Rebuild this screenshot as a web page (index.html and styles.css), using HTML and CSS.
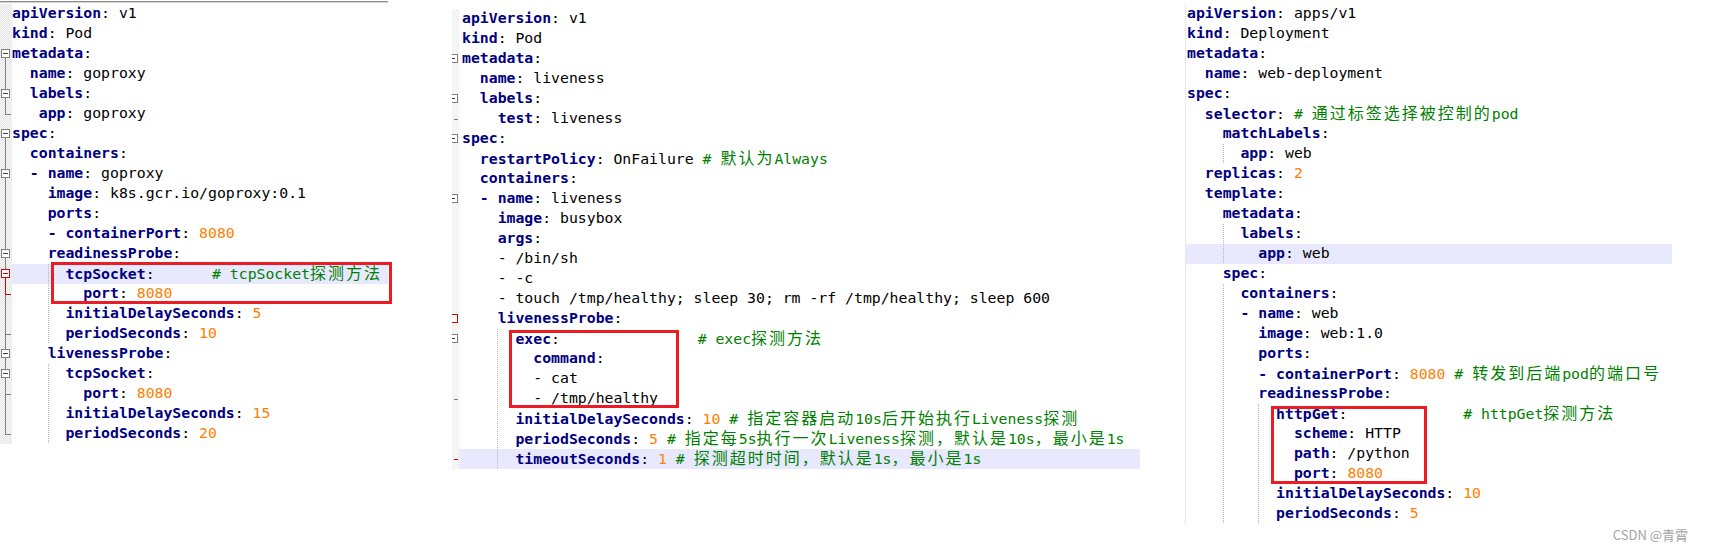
FILE: index.html
```html
<!DOCTYPE html>
<html lang="zh">
<head>
    <meta charset="UTF-8">
    <meta name="viewport" content="width=device-width, initial-scale=1.0">
    <title>Probe YAML</title>
    <link rel="stylesheet" href="styles.css">
</head>
<body>
    <div class="shot">
        <!-- tcpSocket -->
        <section class="pane pane-a">
            <div class="rule"></div>
            <div class="row"><i class="gut"></i><code class="src"><span class="k">apiVersion</span>: v1</code></div>
            <div class="row"><i class="gut"></i><code class="src"><span class="k">kind</span>: Pod</code></div>
            <div class="row"><i class="gut top"></i><code class="src"><span class="k">metadata</span>:</code></div>
            <div class="row"><i class="gut ln"></i><code class="src">  <span class="k">name</span>: goproxy</code></div>
            <div class="row"><i class="gut mid"></i><code class="src">  <span class="k">labels</span>:</code></div>
            <div class="row"><i class="gut end"></i><code class="src">   <span class="k">app</span>: goproxy</code></div>
            <div class="row"><i class="gut top"></i><code class="src"><span class="k">spec</span>:</code></div>
            <div class="row"><i class="gut ln"></i><code class="src">  <span class="k">containers</span>:</code></div>
            <div class="row"><i class="gut mid"></i><code class="src">  <span class="k">- name</span>: goproxy</code></div>
            <div class="row"><i class="gut ln"></i><code class="src">    <span class="k">image</span>: k8s.gcr.io/goproxy:0.1</code></div>
            <div class="row"><i class="gut ln"></i><code class="src">    <span class="k">ports</span>:</code></div>
            <div class="row"><i class="gut ln"></i><code class="src">    <span class="k">- containerPort</span>: <span class="n">8080</span></code></div>
            <div class="row"><i class="gut mid"></i><code class="src">    <span class="k">readinessProbe</span>:</code></div>
            <div class="row"><i class="gut mid red"></i><code class="src hl g4">      <span class="k">tcpSocket</span>:      <span class="c sp"># tcpSocket<span class="z">探测方法</span></span></code></div>
            <div class="row"><i class="gut endr"></i><code class="src g4">        <span class="k">port</span>: <span class="n">8080</span></code></div>
            <div class="row"><i class="gut ln"></i><code class="src g4">      <span class="k">initialDelaySeconds</span>: <span class="n">5</span></code></div>
            <div class="row"><i class="gut endc"></i><code class="src g4">      <span class="k">periodSeconds</span>: <span class="n">10</span></code></div>
            <div class="row"><i class="gut mid"></i><code class="src">    <span class="k">livenessProbe</span>:</code></div>
            <div class="row"><i class="gut mid"></i><code class="src g4">      <span class="k">tcpSocket</span>:</code></div>
            <div class="row"><i class="gut endc"></i><code class="src g4">        <span class="k">port</span>: <span class="n">8080</span></code></div>
            <div class="row"><i class="gut ln"></i><code class="src g4">      <span class="k">initialDelaySeconds</span>: <span class="n">15</span></code></div>
            <div class="row"><i class="gut end"></i><code class="src g4">      <span class="k">periodSeconds</span>: <span class="n">20</span></code></div>
            <div class="mark mark-a"></div>
        </section>

        <!-- exec -->
        <section class="pane pane-b">
            <div class="row"><i class="gut"></i><code class="src"><span class="k">apiVersion</span>: v1</code></div>
            <div class="row"><i class="gut"></i><code class="src"><span class="k">kind</span>: Pod</code></div>
            <div class="row"><i class="gut cut"></i><code class="src"><span class="k">metadata</span>:</code></div>
            <div class="row"><i class="gut"></i><code class="src">  <span class="k">name</span>: liveness</code></div>
            <div class="row"><i class="gut cut"></i><code class="src">  <span class="k">labels</span>:</code></div>
            <div class="row"><i class="gut tick"></i><code class="src">    <span class="k">test</span>: liveness</code></div>
            <div class="row"><i class="gut cut"></i><code class="src"><span class="k">spec</span>:</code></div>
            <div class="row"><i class="gut"></i><code class="src">  <span class="k">restartPolicy</span>: OnFailure <span class="c"># <span class="z">默认为</span>Always</span></code></div>
            <div class="row"><i class="gut"></i><code class="src">  <span class="k">containers</span>:</code></div>
            <div class="row"><i class="gut cut"></i><code class="src">  <span class="k">- name</span>: liveness</code></div>
            <div class="row"><i class="gut"></i><code class="src">    <span class="k">image</span>: busybox</code></div>
            <div class="row"><i class="gut"></i><code class="src">    <span class="k">args</span>:</code></div>
            <div class="row"><i class="gut"></i><code class="src">    - /bin/sh</code></div>
            <div class="row"><i class="gut"></i><code class="src">    - -c</code></div>
            <div class="row"><i class="gut"></i><code class="src">    - touch /tmp/healthy; sleep 30; rm -rf /tmp/healthy; sleep 600</code></div>
            <div class="row"><i class="gut cut red"></i><code class="src">    <span class="k">livenessProbe</span>:</code></div>
            <div class="row"><i class="gut cut"></i><code class="src g4">      <span class="k">exec</span>:               <span class="c sp"># exec<span class="z">探测方法</span></span></code></div>
            <div class="row"><i class="gut"></i><code class="src g4">        <span class="k">command</span>:</code></div>
            <div class="row"><i class="gut"></i><code class="src g4">        - cat</code></div>
            <div class="row"><i class="gut tick"></i><code class="src g4">        - /tmp/healthy</code></div>
            <div class="row"><i class="gut"></i><code class="src g4">      <span class="k">initialDelaySeconds</span>: <span class="n">10</span> <span class="c"># <span class="z">指定容器启动</span>10s<span class="z">后开始执行</span>Liveness<span class="z">探测</span></span></code></div>
            <div class="row"><i class="gut"></i><code class="src g4">      <span class="k">periodSeconds</span>: <span class="n">5</span> <span class="c"># <span class="z">指定每</span>5s<span class="z">执行一次</span>Liveness<span class="z">探测，默认是</span>10s<span class="z">，最小是</span>1s</span></code></div>
            <div class="row"><i class="gut tick red"></i><code class="src hl g4">      <span class="k">timeoutSeconds</span>: <span class="n">1</span> <span class="c"># <span class="z">探测超时时间，默认是</span>1s<span class="z">，最小是</span>1s</span></code></div>
            <div class="mark mark-b"></div>
        </section>

        <!-- httpGet -->
        <section class="pane pane-c">
            <div class="row"><i class="gut"></i><code class="src"><span class="k">apiVersion</span>: apps/v1</code></div>
            <div class="row"><i class="gut"></i><code class="src"><span class="k">kind</span>: Deployment</code></div>
            <div class="row"><i class="gut"></i><code class="src"><span class="k">metadata</span>:</code></div>
            <div class="row"><i class="gut"></i><code class="src">  <span class="k">name</span>: web-deployment</code></div>
            <div class="row"><i class="gut"></i><code class="src"><span class="k">spec</span>:</code></div>
            <div class="row"><i class="gut"></i><code class="src">  <span class="k">selector</span>: <span class="c"># <span class="z">通过标签选择被控制的</span>pod</span></code></div>
            <div class="row"><i class="gut"></i><code class="src">    <span class="k">matchLabels</span>:</code></div>
            <div class="row"><i class="gut"></i><code class="src g4">      <span class="k">app</span>: web</code></div>
            <div class="row"><i class="gut"></i><code class="src">  <span class="k">replicas</span>: <span class="n">2</span></code></div>
            <div class="row"><i class="gut"></i><code class="src">  <span class="k">template</span>:</code></div>
            <div class="row"><i class="gut"></i><code class="src">    <span class="k">metadata</span>:</code></div>
            <div class="row"><i class="gut"></i><code class="src g4">      <span class="k">labels</span>:</code></div>
            <div class="row"><i class="gut"></i><code class="src hl g4">        <span class="k">app</span>: web</code></div>
            <div class="row"><i class="gut"></i><code class="src">    <span class="k">spec</span>:</code></div>
            <div class="row"><i class="gut"></i><code class="src g4">      <span class="k">containers</span>:</code></div>
            <div class="row"><i class="gut"></i><code class="src g4">      <span class="k">- name</span>: web</code></div>
            <div class="row"><i class="gut"></i><code class="src g4">        <span class="k">image</span>: web:1.0</code></div>
            <div class="row"><i class="gut"></i><code class="src g4">        <span class="k">ports</span>:</code></div>
            <div class="row"><i class="gut"></i><code class="src g4">        <span class="k">- containerPort</span>: <span class="n">8080</span> <span class="c"># <span class="z">转发到后端</span>pod<span class="z">的端口号</span></span></code></div>
            <div class="row"><i class="gut"></i><code class="src g4">        <span class="k">readinessProbe</span>:</code></div>
            <div class="row"><i class="gut"></i><code class="src g48">          <span class="k">httpGet</span>:             <span class="c"># httpGet<span class="z">探测方法</span></span></code></div>
            <div class="row"><i class="gut"></i><code class="src g48">            <span class="k">scheme</span>: HTTP</code></div>
            <div class="row"><i class="gut"></i><code class="src g48">            <span class="k">path</span>: /python</code></div>
            <div class="row"><i class="gut"></i><code class="src g48">            <span class="k">port</span>: <span class="n">8080</span></code></div>
            <div class="row"><i class="gut"></i><code class="src g48">          <span class="k">initialDelaySeconds</span>: <span class="n">10</span></code></div>
            <div class="row"><i class="gut"></i><code class="src g48">          <span class="k">periodSeconds</span>: <span class="n">5</span></code></div>
            <div class="mark mark-c"></div>
        </section>
    </div>

    <div class="watermark">CSDN @青霄</div>
</body>
</html>
```

FILE: styles.css
```css
body {
    margin: 0;
    width: 1710px;
    height: 550px;
    overflow: hidden;
    position: relative;
    background: #fff;
    font-family: "DejaVu Sans Mono", "Liberation Mono", monospace;
}
.shot {
    display: flex;
    align-items: flex-start;
}
.pane {
    position: relative;
    flex: none;
    --g4: 36px;
    --g8: 71px;
}
.pane-a {
    width: 388px;
    padding-top: 1px;
}
.pane-b {
    width: 688px;
    margin-left: 64px;
    padding-top: 9px;
    --g4: 38px;
}
.pane-c {
    width: 492px;
    margin-left: 40px;
    padding-top: 4px;
    --g4: 37px;
    --g8: 72px;
}
.rule {
    height: 1px;
    border-top: 1px solid #8c8c8c;
    background: #d4d4d4;
    margin-bottom: 1px;
}

/* one line of code */
.row {
    display: flex;
    height: 20px;
}
.src {
    flex: 1;
    display: block;
    white-space: pre;
    font-family: inherit;
    font-size: 14.8px;
    line-height: 18px;
    color: #000;
    background-repeat: no-repeat;
}
.pane-b .src { padding-left: 3px; }
.pane-c .src { padding-left: 1px; }
.hl { background-color: #e8e8ff; }
.g4 {
    background-image: repeating-linear-gradient(to bottom, #b4b4b4 0 1px, transparent 1px 2px);
    background-size: 1px 100%;
    background-position: var(--g4) 0;
}
.g48 {
    background-image:
        repeating-linear-gradient(to bottom, #b4b4b4 0 1px, transparent 1px 2px),
        repeating-linear-gradient(to bottom, #b4b4b4 0 1px, transparent 1px 2px);
    background-size: 1px 100%, 1px 100%;
    background-position: var(--g4) 0, var(--g8) 0;
}

.k { color: #000080; font-weight: bold; }
.n { color: #ff8000; }
.c { color: #008000; }
.sp { margin-left: 4px; }
.z {
    font-family: "Noto Sans CJK SC", sans-serif;
    font-size: 16px;
    line-height: 16px;
    letter-spacing: 2px;
}

/* fold margin */
.gut {
    flex: none;
    position: relative;
    width: 12px;
    height: 20px;
    background: repeating-conic-gradient(#e2e2e2 0 25%, #fbfbfb 0 50%) 0 0 / 2px 2px;
}
.pane-b .gut {
    width: 7px;
    overflow: hidden;
    background: repeating-conic-gradient(#ececec 0 25%, #fff 0 50%) 4px 0 / 2px 2px;
}
.pane-c .gut {
    width: 6px;
    background: repeating-linear-gradient(to bottom, #d6d6d6 0 1px, transparent 1px 2px) 5px 0 / 1px 100% no-repeat;
}
.gut::before,
.gut::after {
    content: "";
    position: absolute;
}
.ln::before,
.mid::before,
.endc::before {
    left: 5px;
    top: 0;
    bottom: 0;
    width: 1px;
    background: #808080;
}
.top::before {
    left: 5px;
    top: 10px;
    bottom: 0;
    width: 1px;
    background: #808080;
}
.end::before {
    left: 5px;
    top: 0;
    height: 11px;
    width: 1px;
    background: #808080;
}
.endr::before {
    left: 5px;
    top: 0;
    bottom: 0;
    width: 1px;
    background: linear-gradient(#e00000 0 11px, #808080 11px);
}
.top::after,
.mid::after {
    left: 1px;
    top: 5px;
    width: 9px;
    height: 9px;
    box-sizing: border-box;
    border: 1px solid #808080;
    background: linear-gradient(#404040, #404040) center / 5px 1px no-repeat, #fff;
}
.mid.red::before { background: linear-gradient(#808080 0 6px, #e00000 6px); }
.mid.red::after {
    border-color: #e00000;
    background: linear-gradient(#e00000, #e00000) center / 5px 1px no-repeat, #fff;
}
.end::after,
.endc::after,
.endr::after {
    left: 5px;
    top: 10px;
    width: 6px;
    height: 1px;
    background: #808080;
}
.endr::after { background: #e00000; }

/* cropped fold markers on the middle shot */
.cut::after {
    left: -3px;
    top: 5px;
    width: 9px;
    height: 9px;
    box-sizing: border-box;
    border: 1px solid #808080;
    background: linear-gradient(#404040, #404040) 0 center / 5px 1px no-repeat, #fff;
}
.tick::after {
    left: 2px;
    top: 10px;
    width: 4px;
    height: 1px;
    background: #808080;
}
.cut.red::after { border-color: #e00000; background: #fff; }
.tick.red::after { background: #e00000; }

/* red annotation boxes */
.mark {
    position: absolute;
    box-sizing: border-box;
    border: 3px solid #ec1c24;
}
.mark-a { left: 51px; top: 262px; width: 341px; height: 42px; }
.mark-b { left: 57px; top: 330px; width: 170px; height: 78px; }
.mark-c { left: 91px; top: 406px; width: 156px; height: 78px; }

.watermark {
    position: absolute;
    right: 22px;
    bottom: 7px;
    font-family: "Noto Sans CJK SC", sans-serif;
    font-size: 13px;
    line-height: 16px;
    color: #a3a3a3;
}
```
